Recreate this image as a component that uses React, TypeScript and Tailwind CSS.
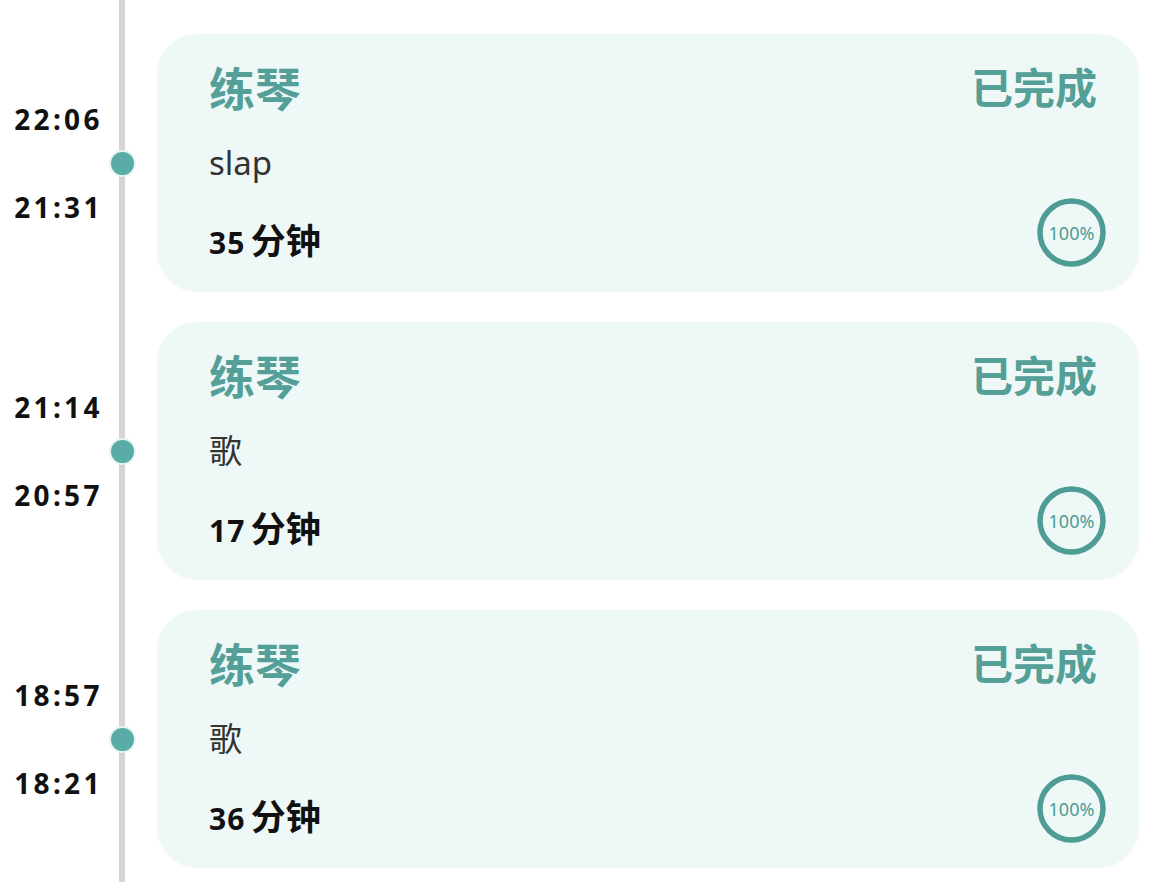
import React from 'react';

interface Session {
  start: string;
  end: string;
  title: string;
  status: string;
  note: string;
  minutes: number;
  progress: number;
}

const sessions: Session[] = [
  { start: '22:06', end: '21:31', title: '练琴', status: '已完成', note: 'slap', minutes: 35, progress: 100 },
  { start: '21:14', end: '20:57', title: '练琴', status: '已完成', note: '歌', minutes: 17, progress: 100 },
  { start: '18:57', end: '18:21', title: '练琴', status: '已完成', note: '歌', minutes: 36, progress: 100 },
];

const font = { fontFamily: '"Noto Sans", "Noto Sans CJK SC", sans-serif' };

function ProgressRing({ value }: { value: number }) {
  return (
    <div className="relative flex h-[69px] w-[69px] items-center justify-center">
      <svg width="69" height="69" viewBox="0 0 69 69" className="absolute inset-0">
        <circle cx="34.5" cy="34.5" r="31.5" fill="none" stroke="#4e9c94" strokeWidth="5.5" />
      </svg>
      <span className="text-[18px] leading-none text-[#4f9c95]">{value}%</span>
    </div>
  );
}

function SessionRow({ s }: { s: Session }) {
  return (
    <div className="flex items-center">
      {/* 时间 */}
      <div className="flex w-[111px] flex-col items-center gap-[52px] pl-[6px] text-[28px] font-bold leading-[36px] tracking-[0.12em] text-[#111]">
        <span>{s.start}</span>
        <span>{s.end}</span>
      </div>
      {/* 节点 */}
      <div className="flex w-[46px] items-center">
        <div className="h-[23px] w-[23px] rounded-full bg-[#5aaca7] shadow-[0_0_0_2px_#e3f4f3]" />
      </div>
      {/* 卡片 */}
      <div className="flex h-[258px] w-[982px] flex-col rounded-[40px] bg-[#eef8f7] pb-[26px] pl-[52px] pr-[33px] pt-[26px]">
        <div className="flex items-center justify-between pr-[9px] font-semibold leading-[56px] text-[#549f98]">
          <span className="text-[46px]">{s.title}</span>
          <span className="text-[42px]">{s.status}</span>
        </div>
        <div className="mt-[25px] text-[33px] leading-[44px] text-[#333]">{s.note}</div>
        <div className="mt-[13px] flex items-end justify-between">
          <div className="mb-[4px] flex items-baseline font-bold leading-[40px] text-[#111]">
            <span className="text-[30px] tracking-[0.04em]">{s.minutes}</span>
            <span className="ml-[5px] text-[35px]">分钟</span>
          </div>
          <ProgressRing value={s.progress} />
        </div>
      </div>
    </div>
  );
}

export default function App() {
  return (
    <div className="h-[893px] w-[1169px] overflow-hidden bg-white" style={font}>
      <div className="flex h-[882px] flex-col gap-[30px] bg-[linear-gradient(to_right,transparent_119px,#d4d4d4_119px,#d4d4d4_125px,transparent_125px)] pt-[34px]">
        {sessions.map((s, i) => (
          <SessionRow key={i} s={s} />
        ))}
      </div>
    </div>
  );
}
